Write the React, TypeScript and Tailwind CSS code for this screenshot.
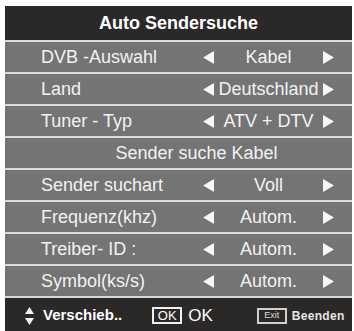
import React from "react";

// eine Zeile im Menü: Bezeichnung + Auswahl mit Pfeilen
interface MenuRow {
    label: string;
    value?: string;
}

const rows: MenuRow[] = [
    { label: "DVB -Auswahl", value: "Kabel" },
    { label: "Land", value: "Deutschland" },
    { label: "Tuner - Typ", value: "ATV + DTV" },
    { label: "Sender suche Kabel" },
    { label: "Sender suchart", value: "Voll" },
    { label: "Frequenz(khz)", value: "Autom." },
    { label: "Treiber- ID :", value: "Autom." },
    { label: "Symbol(ks/s)", value: "Autom." },
];

function ArrowLeft() {
    return (
        <svg width="11" height="13" viewBox="0 0 11 13" className="shrink-0">
            <polygon points="11,0 11,13 0,6.5" fill="#f6f6f6" />
        </svg>
    );
}

function ArrowRight() {
    return (
        <svg width="11" height="13" viewBox="0 0 11 13" className="shrink-0">
            <polygon points="0,0 0,13 11,6.5" fill="#f6f6f6" />
        </svg>
    );
}

function Row({ label, value }: MenuRow) {
    return (
        <>
            <div className="h-[2px] bg-[#d9d9d9]" />
            <div className="h-[30px] bg-[#747474] flex items-center text-[18px] text-[#f2f2f2] leading-none">
                {value === undefined ? (
                    <div className="w-full flex justify-center pl-[36px]">{label}</div>
                ) : (
                    <>
                        <div className="w-[198px] pl-[36px] shrink-0 whitespace-nowrap">{label}</div>
                        <ArrowLeft />
                        <div className="w-[109px] text-center whitespace-nowrap">{value}</div>
                        <ArrowRight />
                    </>
                )}
            </div>
        </>
    );
}

export default function App() {
    return (
        <div
            className="w-[354px] h-[331px] bg-white pt-[6px] pl-[5px] overflow-hidden"
            style={{ fontFamily: '"Liberation Sans", Arial, sans-serif' }}
        >
            <div className="w-[347px] flex flex-col">
                <div className="h-[34px] bg-[#2b2829] flex items-center justify-center text-white font-bold text-[18px]">
                    Auto Sendersuche
                </div>
                {rows.map((r, idx) => (
                    <Row key={idx} label={r.label} value={r.value} />
                ))}
                <div className="h-[2px] bg-[#d9d9d9]" />
                <div className="h-[35px] bg-[#2b2828] flex items-center text-white">
                    {/* hoch/runter Pfeile */}
                    <svg width="9" height="18" viewBox="0 0 9 18" className="ml-[20px]">
                        <polygon points="4.5,0 9,7 0,7" fill="#f4f4f4" />
                        <polygon points="0,11 9,11 4.5,18" fill="#f4f4f4" />
                    </svg>
                    <span className="ml-[9px] font-bold text-[15px]">Verschieb..</span>
                    <span className="ml-[30px] w-[30px] h-[17px] border-2 border-[#f0f0f0] flex items-center justify-center text-[13px] leading-none">
                        OK
                    </span>
                    <span className="ml-[6px] text-[17px]">OK</span>
                    <span className="ml-[44px] w-[30px] h-[16px] border-2 border-[#cfcfcf] flex items-center justify-center text-[9px] leading-none text-[#dcdcdc]">
                        Exit
                    </span>
                    <span className="ml-[5px] text-[12px] font-semibold tracking-[0.3px] text-[#e6e6e6]">Beenden</span>
                </div>
            </div>
        </div>
    );
}
